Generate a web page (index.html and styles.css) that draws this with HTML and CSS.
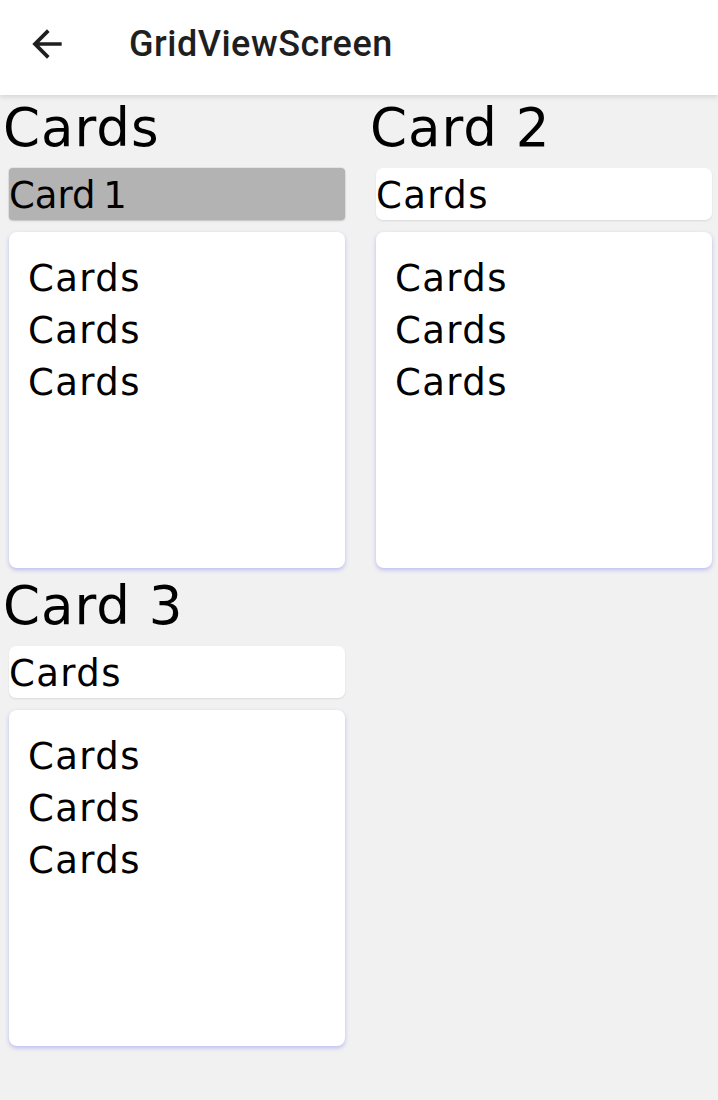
FILE: index.html
```html
<!DOCTYPE html>
<html>
<head>
<meta charset="utf-8">
<link rel="stylesheet" href="styles.css">
</head>
<body>
<header class="appbar">
  <span class="back">
    <svg viewBox="0 0 24 24" width="44" height="44"><path d="M20 11H7.83l5.59-5.59L12 4l-8 8 8 8 1.41-1.41L7.83 13H20v-2z" fill="#1f1f1f"/></svg>
  </span>
  <h1 class="title">GridViewScreen</h1>
</header>
<main class="grid">
  <section class="cell">
    <h2 class="heading">Cards</h2>
    <div class="label label-grey">Card 1</div>
    <div class="card">
      <div class="line">Cards</div>
      <div class="line">Cards</div>
      <div class="line">Cards</div>
    </div>
  </section>
  <section class="cell">
    <h2 class="heading">Card 2</h2>
    <div class="label">Cards</div>
    <div class="card">
      <div class="line">Cards</div>
      <div class="line">Cards</div>
      <div class="line">Cards</div>
    </div>
  </section>
  <section class="cell">
    <h2 class="heading">Card 3</h2>
    <div class="label">Cards</div>
    <div class="card">
      <div class="line">Cards</div>
      <div class="line">Cards</div>
      <div class="line">Cards</div>
    </div>
  </section>
</main>
</body>
</html>
```

FILE: styles.css
```css
html, body {
  margin: 0;
  padding: 0;
}
body {
  background: #f1f1f1;
  min-height: 1100px;
  font-family: "DejaVu Sans", sans-serif;
  color: #000;
}
.appbar {
  height: 95px;
  background: #fff;
  display: flex;
  align-items: center;
  box-shadow: 0 2px 5px rgba(0, 0, 0, 0.12);
  position: relative;
  z-index: 1;
}
.back {
  width: 44px;
  height: 44px;
  margin-left: 25px;
  margin-top: -8px;
  display: flex;
}
.title {
  margin: -8px 0 0 60px;
  font-family: Roboto, sans-serif;
  font-weight: 500;
  font-size: 36px;
  letter-spacing: 0.5px;
  color: #1f1f1f;
}
.grid {
  display: grid;
  grid-template-columns: 351px 351px;
  column-gap: 16px;
}
.cell {
  height: 478px;
  display: flex;
  flex-direction: column;
}
.heading {
  margin: 0 0 8px 0;
  padding-left: 3px;
  font-weight: 400;
  font-size: 53px;
  letter-spacing: 1px;
  line-height: 65px;
  height: 65px;
}
.label {
  margin-left: 9px;
  width: 336px;
  height: 52px;
  line-height: 55px;
  font-size: 37px;
  letter-spacing: 1.4px;
  box-sizing: border-box;
  background: #fff;
  border-radius: 7px;
  box-shadow: 0 1px 2px rgba(0, 0, 0, 0.1);
}
.label-grey {
  background: #b3b3b3;
  border-radius: 4px;
  letter-spacing: 0;
  word-spacing: -4px;
  box-shadow: 0 0 0 1px rgba(0, 0, 0, 0.05), 0 1px 2px rgba(0, 0, 0, 0.15);
}
.card {
  margin: 12px 0 0 9px;
  width: 336px;
  height: 336px;
  box-sizing: border-box;
  padding: 21px 19px;
  background: #fff;
  border-radius: 8px;
  box-shadow: 0 2px 4px rgba(100, 100, 240, 0.38);
}
.line {
  font-size: 37px;
  letter-spacing: 1.4px;
  line-height: 52px;
}
```
